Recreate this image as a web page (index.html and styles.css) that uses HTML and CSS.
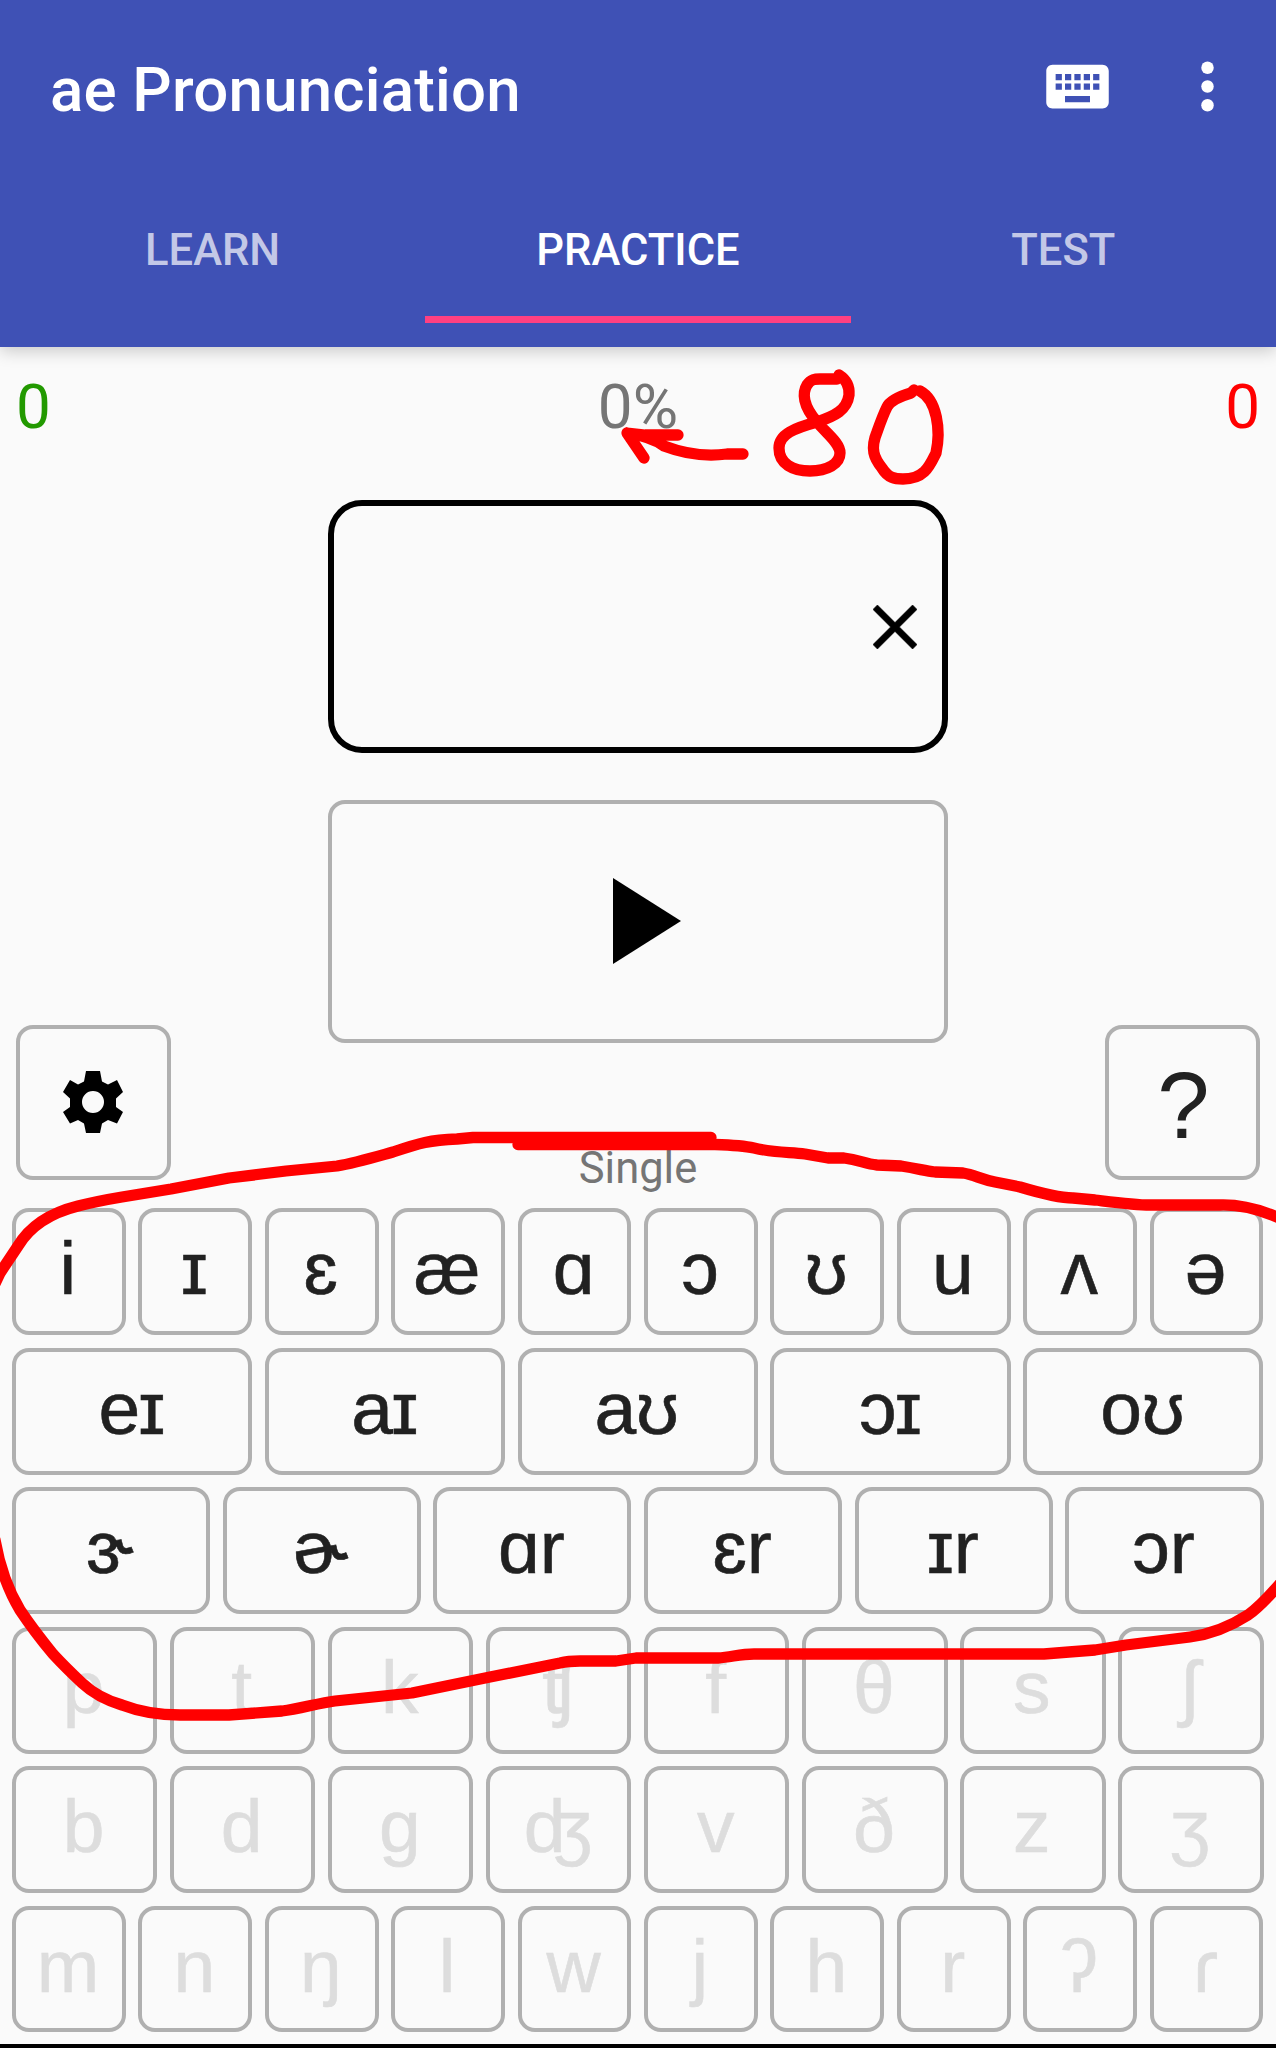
FILE: index.html
```html
<!DOCTYPE html>
<html lang="en">
<head>
<meta charset="utf-8">
<title>ae Pronunciation</title>
<link rel="stylesheet" href="styles.css">
</head>
<body>
<header class="appbar">
  <div class="toolbar">
    <h1 class="title">ae Pronunciation</h1>
    <svg class="icon" viewBox="0 0 24 24"><path fill-rule="evenodd" d="M20 5H4c-1.100 0-1.990.9-1.990 2L2 17c0 1.100.9 2 2 2h16c1.100 0 2-.9 2-2V7c0-1.100-.9-2-2-2zm-9 3h2v2h-2V8zm0 3h2v2h-2v-2zM8 8h2v2H8V8zm0 3h2v2H8v-2zm-1 2H5v-2h2v2zm0-3H5V8h2v2zm9 7H8v-2h8v2zm0-4h-2v-2h2v2zm0-3h-2V8h2v2zm3 3h-2v-2h2v2zm0-3h-2V8h2v2z"/></svg>
    <svg class="icon" viewBox="0 0 24 24"><circle cx="12" cy="6" r="2"/><circle cx="12" cy="12" r="2"/><circle cx="12" cy="18" r="2"/></svg>
  </div>
  <nav class="tabs">
    <span class="tab">LEARN</span>
    <span class="tab active">PRACTICE</span>
    <span class="tab">TEST</span>
  </nav>
</header>
<main class="content">
  <div class="scores"><span class="right">0</span><span class="percent">0%</span><span class="wrong">0</span></div>
  <div class="answer"><svg class="clear" viewBox="5 5 14 14"><path d="M19 6.410L17.590 5 12 10.590 6.410 5 5 6.410 10.590 12 5 17.590 6.410 19 12 13.410 17.590 19 19 17.590 13.410 12z"/></svg></div>
  <div class="play"><svg viewBox="0 0 68 86"><path d="M0 0L68 43 0 86z"/></svg></div>
  <div class="controls">
    <div class="square"><svg class="gear" viewBox="0 0 90 90"><path fill-rule="evenodd" d="M36 11H50L52 21.500 58 24.500 67 20 73 32 66 38.500V47L73 52 67 63.500 58 60 52 63.500 50 73H36L34 63.500 28 60 20 63.500 13 52 20 47V38.500L13 32 20 20 28 24.500 34 21.500zM43 31A11 11 0 1 0 43 53 11 11 0 1 0 43 31z"/></svg></div>
    <span class="mode">Single</span>
    <div class="square help">?</div>
  </div>
  <div class="keyboard">
    <div class="row"><span>i</span><span>ɪ</span><span>ɛ</span><span>æ</span><span>ɑ</span><span>ɔ</span><span>ʊ</span><span>u</span><span>ʌ</span><span>ə</span></div>
    <div class="row"><span class="tight">eɪ</span><span class="tight">aɪ</span><span>aʊ</span><span class="tight">ɔɪ</span><span>oʊ</span></div>
    <div class="row"><span>ɝ</span><span>ɚ</span><span>ɑr</span><span>ɛr</span><span>ɪr</span><span>ɔr</span></div>
    <div class="row off"><span>p</span><span>t</span><span>k</span><span>ʧ</span><span>f</span><span>θ</span><span>s</span><span>ʃ</span></div>
    <div class="row off"><span>b</span><span>d</span><span>g</span><span>ʤ</span><span>v</span><span>ð</span><span>z</span><span>ʒ</span></div>
    <div class="row off"><span>m</span><span>n</span><span>ŋ</span><span>l</span><span>w</span><span>j</span><span>h</span><span>r</span><span>ʔ</span><span>ɾ</span></div>
  </div>
</main>
<svg class="ink" viewBox="0 0 1276 2048">
  <path d="M-8 1290L0 1273 18 1246C30 1226 50 1213 78 1206 98 1201 110 1199 122 1197L171 1189 229 1178 286 1171 337 1166C355 1163 375 1157 393 1152 420 1143 430 1140 457 1139L473 1137.500H711"/>
  <path d="M518 1144.500H715C730 1145 745 1146 754 1148 775 1153 790 1152 805 1154L828 1158H844C860 1160 865 1164 877 1165L901 1166C920 1169 925 1171 935 1172L963 1173C975 1175 980 1179 995 1182L1020 1187C1040 1193 1060 1198 1073 1198L1095 1200C1120 1203 1135 1205 1150 1205H1220Q1250 1204 1286 1221"/>
  <path d="M-5 1540Q2 1580 20 1610 34 1631 53 1654 65 1667 82 1683 98 1698 122 1705 148 1715 180 1715H229L282 1711C300 1709 318 1703 335 1701L412 1693 490 1677 560 1663Q568 1661 580 1661H616L636 1658H718C732 1657 740 1654 754 1654H1044L1069 1652 1095 1650 1126 1645 1190 1637Q1220 1633 1248 1615 1262 1605 1284 1579"/>
  <path d="M644 458L627 433 645 435H678M627 433Q652 437 664 446C685 454 705 457 727 454H743"/>
  <path d="M839 375Q850 382 849 395C847 410 835 416 817 422 795 428 779 434 779 448 779 464 793 471 810 471 827 471 840 464 840 453 840 443 827 434 817 422 803 406 802 393 807 385 811 379 815 379 820 379H837"/>
  <path d="M914 390L911 393Q891 399 887 407 883 415 877 432C870 449 874 458 882 468 888 478 895 479 903 479 925 479 930 465 936 453 941 430 937 400 920 391"/>
</svg>
</body>
</html>
```
FILE: styles.css
```css
* { box-sizing: border-box; }
body {
  margin: 0;
  width: 1276px;
  height: 2048px;
  overflow: hidden;
  position: relative;
  display: flex;
  flex-direction: column;
  background: #fafafa;
  border-bottom: 4px solid #000;
  font-family: Roboto, sans-serif;
}
.appbar {
  height: 347px;
  flex: none;
  background: #3f51b5;
  color: #fff;
  box-shadow: 0 4px 16px rgba(0, 0, 0, .2);
}
.toolbar {
  height: 173px;
  display: flex;
  align-items: center;
  padding: 0 31px 0 50px;
}
.title {
  flex: 1;
  margin: 6px 0 0;
  font-size: 61.800px;
  font-weight: 500;
  line-height: 72px;
  letter-spacing: .2px;
}
.icon { width: 75px; height: 75px; fill: #fff; }
.icon + .icon { margin-left: 55px; }
.tabs { display: flex; height: 150px; }
.tab {
  flex: 1;
  text-align: center;
  font-size: 43.500px;
  font-weight: 500;
  line-height: 155px;
  color: rgba(255, 255, 255, .7);
}
.tab.active { color: #fff; border-bottom: 7px solid #ff4081; }
.content { display: flex; flex-direction: column; flex: 1; }
.scores {
  display: flex;
  justify-content: space-between;
  height: 153px;
  padding: 24px 16px 0;
  font-size: 62px;
  line-height: 72px;
}
.right { color: #290; }
.percent { color: #757575; }
.wrong { color: #f00; }
.answer, .play { width: 620px; align-self: center; display: flex; align-items: center; }
.answer {
  height: 253px;
  border: 6px solid #000;
  border-radius: 34px;
  justify-content: flex-end;
  padding-right: 25px;
}
.clear { width: 44px; height: 44px; stroke: #000; stroke-width: .2; }
.play {
  height: 243px;
  margin-top: 47px;
  border: 4px solid #b0b0b0;
  border-radius: 17px;
  justify-content: center;
  padding-left: 18px;
}
.play svg { width: 68px; height: 86px; margin-bottom: 1px; }
.controls {
  display: flex;
  justify-content: space-between;
  height: 155px;
  margin: -18px 16px 28.400px;
}
.square {
  width: 155px;
  display: flex;
  align-items: center;
  justify-content: center;
  border: 4px solid #b0b0b0;
  border-radius: 17px;
}
.gear { width: 90px; height: 90px; margin: 4px 0 0 2px; }
.help { font: 94px/1 "Liberation Sans", sans-serif; color: #212121; padding: 6px 0 0 2px; }
.mode { align-self: flex-end; font-size: 43.500px; line-height: 50px; color: #757575; margin-bottom: -14px; }
.keyboard { display: flex; flex-direction: column; gap: 12.650px; padding: 0 12.500px 0 12px; }
.row { display: flex; gap: 12.600px; height: 126.800px; }
.row span {
  flex: 1 1 0;
  min-width: 0;
  padding-right: 2px;
  text-align: center;
  border: 4px solid #b0b0b0;
  border-radius: 17px;
  font: 75px/112px "Liberation Sans", sans-serif;
  color: #212121;
  -webkit-text-stroke: .6px;
}
.row .tight { letter-spacing: -1.500px; }
.row.off span { color: #ddd; }
.ink {
  position: absolute;
  inset: 0;
  width: 1276px;
  height: 2048px;
  fill: none;
  stroke: #f00;
  stroke-width: 11.300px;
  stroke-linecap: round;
  stroke-linejoin: round;
}
```
